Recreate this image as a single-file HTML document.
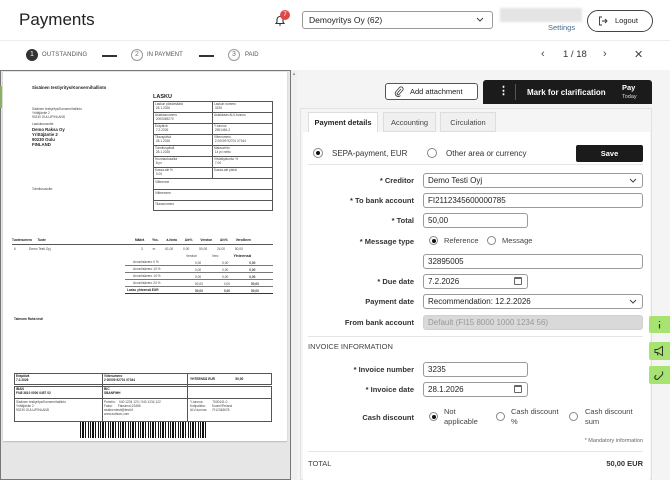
<!DOCTYPE html>
<html><head><meta charset="utf-8"><style>
*{box-sizing:border-box;margin:0;padding:0}
body{width:670px;height:480px;overflow:hidden;background:#fff;font-family:"Liberation Sans",Arial,sans-serif;color:#222;position:relative}
.a{position:absolute}
.t{position:absolute;white-space:nowrap}
.inp{position:absolute;border:1px solid #9a9a9a;border-radius:3px;background:#fff;font-size:8px;padding-left:4px;line-height:13px;height:15px}
.lbl{position:absolute;right:256px;font-size:7.5px;color:#333;font-weight:bold;white-space:nowrap}
.rad{position:absolute;width:10px;height:10px;border:1px solid #888;border-radius:50%;background:#fff}
.rad.on::after{content:"";position:absolute;left:2px;top:2px;width:4px;height:4px;border-radius:50%;background:#111}
.p{position:absolute;font-size:3.2px;color:#444;white-space:nowrap;line-height:4px}
.b{position:absolute;border:0.8px solid #555}
.gb{position:absolute;left:649px;width:21px;background:#a6e370;border-radius:2px 0 0 2px}
.cal{position:absolute;width:8px;height:8px;border:1px solid #666;border-top-width:2px;border-radius:1px}
</style></head><body>
<div class="t" style="left:19px;top:10px;font-size:17px;color:#222">Payments</div>
<svg class="a" style="left:274px;top:14px" width="12" height="13" viewBox="0 0 12 13"><path d="M2 9.5h8l-1-1.5V5.5a3 3 0 0 0-6 0V8z M5 11h2" fill="none" stroke="#333" stroke-width="1.1"/></svg>
<div class="a" style="left:280px;top:10px;width:10px;height:10px;border-radius:50%;background:#e04848;color:#fff;font-size:6.5px;text-align:center;line-height:10px">7</div>
<div class="a" style="left:302px;top:11px;width:191px;height:18px;border:1px solid #999;border-radius:3px;font-size:8.5px;padding-left:6px;line-height:16px">Demoyritys Oy (62)</div>
<svg class="a" style="left:476px;top:17px" width="8" height="6"><path d="M1 1l3 3 3-3" fill="none" stroke="#444"/></svg>
<div class="a" style="left:500px;top:8px;width:82px;height:14px;background:#e4e4e4;filter:blur(1px)"></div>
<div class="t" style="left:548px;top:23px;font-size:7.5px;color:#4a6a8a">Settings</div>
<div class="a" style="left:587px;top:10px;width:66px;height:22px;border:1px solid #444;border-radius:11px;font-size:7.5px;line-height:20px;padding-left:27px">Logout</div>
<svg class="a" style="left:598px;top:16px" width="10" height="10"><path d="M4 1H1.5v8H4M4 5h5M7 3l2 2-2 2" fill="none" stroke="#333" stroke-width="0.9"/></svg>
<div class="a" style="left:0;top:40px;width:670px;height:1px;background:#eee"></div>
<div class="a" style="left:26px;top:49px;width:12px;height:12px;border-radius:50%;background:#333;color:#fff;font-size:7px;text-align:center;line-height:12px">1</div>
<div class="t" style="left:42px;top:52px;font-size:6px;color:#555;letter-spacing:.2px">OUTSTANDING</div>
<div class="a" style="left:102px;top:55px;width:15px;height:1.5px;background:#333"></div>
<div class="a" style="left:131px;top:49px;width:12px;height:12px;border-radius:50%;border:1px solid #999;color:#777;font-size:7px;text-align:center;line-height:10px">2</div>
<div class="t" style="left:147px;top:52px;font-size:6px;color:#555">IN PAYMENT</div>
<div class="a" style="left:199px;top:55px;width:15px;height:1.5px;background:#333"></div>
<div class="a" style="left:228px;top:49px;width:12px;height:12px;border-radius:50%;border:1px solid #999;color:#777;font-size:7px;text-align:center;line-height:10px">3</div>
<div class="t" style="left:245px;top:52px;font-size:6px;color:#555">PAID</div>
<div class="t" style="left:541px;top:48px;font-size:11px;color:#444">‹</div>
<div class="t" style="left:563px;top:49px;font-size:9.5px;color:#333">1 / 18</div>
<div class="t" style="left:603px;top:48px;font-size:11px;color:#444">›</div>
<div class="t" style="left:634px;top:48px;font-size:11px;color:#444">✕</div>
<div class="a" style="left:0;top:70px;width:291px;height:410px;background:#e6e6e6;border:1px solid #777"></div>
<div class="a" style="left:3px;top:72px;width:284px;height:369px;background:#fff;box-shadow:0 1px 1px #bbb"></div>
<div class="a" style="left:291px;top:70px;width:6px;height:410px;background:#f0f0f0"></div>
<div class="t" style="left:292px;top:71px;font-size:4px;color:#888">▲</div>
<div class="a" style="left:0;top:86px;width:2px;height:22px;background:#8ab060"></div>
<div class="p" style="left:32px;top:86px;font-size:4.3px;font-weight:bold;color:#222">Sisäinen testiyritys/Konsernihallinto</div>
<div class="p" style="left:153px;top:94px;font-size:5.5px;font-weight:bold;color:#222;line-height:6px">LASKU</div>
<div class="p" style="left:32px;top:107px">Sisäinen testiyritys/Konsernihallinto<br>Yrittäjäntie 2<br>90230 OULU/FINLAND</div>
<div class="p" style="left:32px;top:122px">Laskutusosoite:</div>
<div class="p" style="left:32px;top:127px;font-size:4.3px;font-weight:bold;color:#222;line-height:5px">Demo Raksa Oy<br>Yrittäjäntie 2<br>90230 Oulu<br>FINLAND</div>
<div class="p" style="left:32px;top:187px">Toimitusosoite:</div>
<div class="b" style="left:153px;top:101px;width:120px;height:110px"></div>
<div class="a" style="left:212px;top:101px;width:1px;height:77px;background:#555"></div>
<div class="a" style="left:153px;top:112px;width:120px;height:1px;background:#555"></div>
<div class="a" style="left:153px;top:123px;width:120px;height:1px;background:#555"></div>
<div class="a" style="left:153px;top:134px;width:120px;height:1px;background:#555"></div>
<div class="a" style="left:153px;top:145px;width:120px;height:1px;background:#555"></div>
<div class="a" style="left:153px;top:156px;width:120px;height:1px;background:#555"></div>
<div class="a" style="left:153px;top:167px;width:120px;height:1px;background:#555"></div>
<div class="a" style="left:153px;top:178px;width:120px;height:1px;background:#555"></div>
<div class="a" style="left:153px;top:189px;width:120px;height:1px;background:#555"></div>
<div class="a" style="left:153px;top:200px;width:120px;height:1px;background:#555"></div>
<div class="p" style="left:155px;top:102px">Laskun päivämäärä<br>&nbsp;28.1.2026</div>
<div class="p" style="left:214px;top:102px">Laskun numero<br>&nbsp;3235</div>
<div class="p" style="left:155px;top:113px">Asiakasnumero<br>&nbsp;2000069270</div>
<div class="p" style="left:214px;top:113px">Asiakkaan ALV-tunnus</div>
<div class="p" style="left:155px;top:124px">Eräpäivä<br>&nbsp;7.2.2026</div>
<div class="p" style="left:214px;top:124px">Y-tunnus<br>&nbsp;2951454-2</div>
<div class="p" style="left:155px;top:135px">Tilauspäivä<br>&nbsp;28.1.2026</div>
<div class="p" style="left:214px;top:135px">Viitenumero<br>&nbsp;2 00009 92701 07344</div>
<div class="p" style="left:155px;top:146px">Toimituspäivä<br>&nbsp;28.1.2026</div>
<div class="p" style="left:214px;top:146px">Maksuehto<br>&nbsp;14 pv netto</div>
<div class="p" style="left:155px;top:157px">Huomautusaika<br>&nbsp;8 pv</div>
<div class="p" style="left:214px;top:157px">Viivästyskorko %<br>&nbsp;7.00</div>
<div class="p" style="left:155px;top:168px">Kassa-ale %<br>&nbsp;0.00</div>
<div class="p" style="left:214px;top:168px">Kassa-ale päivä</div>
<div class="p" style="left:155px;top:180px">Viitteenne</div>
<div class="p" style="left:155px;top:191px">Viitteemme</div>
<div class="p" style="left:155px;top:202px">Tilausnumero</div>
<div class="p" style="left:12px;top:238px;font-weight:bold;color:#222">Tuotenumero&nbsp;&nbsp;&nbsp;&nbsp;&nbsp;&nbsp;Tuote</div>
<div class="p" style="left:135px;top:238px;font-weight:bold;color:#222;word-spacing:7px">Määrä Yks. á-hinta Ale% Veroton Alv% Verollinen</div>
<div class="a" style="left:12px;top:244px;width:261px;height:0.8px;background:#555"></div>
<div class="p" style="left:14px;top:247px">6&nbsp;&nbsp;&nbsp;&nbsp;&nbsp;&nbsp;&nbsp;&nbsp;&nbsp;&nbsp;&nbsp;&nbsp;&nbsp;&nbsp;&nbsp;Demo Testi Oyj</div>
<div class="p" style="left:141px;top:247px;word-spacing:9px">3 m 61,00 0,00 50,00 24,00 50,00</div>
<div class="p" style="left:186px;top:254px;word-spacing:14px">Veroton Vero <b style="font-size:4px;color:#222">Yhteensä</b></div>
<div class="a" style="left:125px;top:259px;width:148px;height:34px;background:repeating-linear-gradient(#fff 0 6px,#777 6px 7px)"></div>
<div class="p" style="left:133px;top:260px">Arvonlisävero 0 %</div>
<div class="p" style="left:133px;top:267px">Arvonlisävero 10 %</div>
<div class="p" style="left:133px;top:274px">Arvonlisävero 14 %</div>
<div class="p" style="left:133px;top:281px">Arvonlisävero 24 %</div>
<div class="p" style="left:127px;top:288px;font-weight:bold;color:#222">Lasku yhteensä EUR</div>
<div class="p" style="left:195px;top:260px;line-height:7px;word-spacing:20px">0,00 0,00 <b>0,00</b><br>0,00 0,00 <b>0,00</b><br>0,00 0,00 <b>0,00</b><br>50,00 0,00 <b>50,00</b><br><b>50,00 0,00 50,00</b></div>
<div class="a" style="left:125px;top:293px;width:148px;height:1px;background:#333"></div>
<div class="p" style="left:14px;top:317px;font-weight:bold;color:#222">Talenom Raha testi</div>
<div class="b" style="left:14px;top:373px;width:258px;height:12px"></div>
<div class="a" style="left:102px;top:373px;width:1px;height:49px;background:#555"></div>
<div class="a" style="left:187px;top:373px;width:1px;height:49px;background:#555"></div>
<div class="b" style="left:14px;top:386px;width:258px;height:36px"></div>
<div class="a" style="left:14px;top:398px;width:258px;height:1px;background:#555"></div>
<div class="p" style="left:16px;top:374px;font-weight:bold;color:#222">Eräpäivä<br>7.2.2026</div>
<div class="p" style="left:104px;top:374px;font-weight:bold;color:#222">Viitenumero<br>2 00009 92701 07344</div>
<div class="p" style="left:190px;top:377px;font-weight:bold;color:#222">YHTEENSÄ EUR&nbsp;&nbsp;&nbsp;&nbsp;&nbsp;&nbsp;&nbsp;&nbsp;&nbsp;&nbsp;&nbsp;&nbsp;&nbsp;&nbsp;&nbsp;&nbsp;&nbsp;&nbsp;&nbsp;&nbsp;&nbsp;&nbsp;&nbsp;50,00</div>
<div class="p" style="left:16px;top:387px;font-weight:bold;color:#222">IBAN<br>FI48 3610 0000 0457 02</div>
<div class="p" style="left:104px;top:387px;font-weight:bold;color:#222">BIC<br>SBANFIHH</div>
<div class="p" style="left:16px;top:400px">Sisäinen testiyritys/Konsernihallinto<br>Yrittäjäntie 2<br>90230 OULU/FINLAND</div>
<div class="p" style="left:104px;top:400px">Puhelin:&nbsp;&nbsp;&nbsp;&nbsp;040 1234 123 / 040 1234 122<br>Faksi:&nbsp;&nbsp;&nbsp;&nbsp;&nbsp;&nbsp;Faksinro123456<br>sisäinentesti@testi.fi<br>www.kotisivu.com</div>
<div class="p" style="left:190px;top:400px">Y-tunnus:&nbsp;&nbsp;&nbsp;&nbsp;&nbsp;&nbsp;&nbsp;&nbsp;&nbsp;&nbsp;7000441-0<br>Kotipaikka:&nbsp;&nbsp;&nbsp;&nbsp;&nbsp;&nbsp;&nbsp;Suomi/Finland<br>ALV-tunnus:&nbsp;&nbsp;&nbsp;&nbsp;&nbsp;&nbsp;FI12345678</div>
<div class="a" style="left:80px;top:422px;width:126px;height:16px;background:repeating-linear-gradient(90deg,#111 0 1px,#fff 1px 2px,#111 2px 4px,#fff 4px 5px,#111 5px 6px,#fff 6px 8px,#111 8px 9px,#fff 9px 10px)"></div>
<div class="a" style="left:297px;top:70px;width:373px;height:410px;background:#f4f4f4"></div>
<div class="a" style="left:385px;top:83px;width:93px;height:17px;border:1px solid #555;border-radius:3px;background:#fff;font-size:7.5px;line-height:15px;padding-left:24px">Add attachment</div>
<svg class="a" style="left:394px;top:86px" width="10" height="11"><path d="M7 3L3.5 7a1 1 0 0 0 1.5 1.5L8.5 4.5a2 2 0 0 0-3-3L2 5.5a3 3 0 0 0 4.5 4" fill="none" stroke="#444" stroke-width="0.9"/></svg>
<div class="a" style="left:483px;top:80px;width:169px;height:24px;background:#1b1b1b;border-radius:3px 3px 0 0"></div>
<div class="t" style="left:498px;top:84px;font-size:11px;color:#fff;font-weight:bold">⋮</div>
<div class="a" style="left:515px;top:84px;width:1px;height:16px;background:#555"></div>
<div class="t" style="left:527px;top:88px;font-size:8px;color:#fff;font-weight:bold">Mark for clarification</div>
<div class="t" style="left:622px;top:83px;font-size:7.5px;color:#fff;font-weight:bold">Pay</div>
<div class="t" style="left:622px;top:94px;font-size:5.5px;color:#ddd">Today</div>
<div class="a" style="left:300px;top:108px;width:352px;height:372px;border:1px solid #e2e2e2;background:#f5f5f5"></div>
<div class="a" style="left:308px;top:112px;width:70px;height:21px;background:#fff;border:1px solid #ddd;border-bottom:none;font-size:7.5px;font-weight:bold;text-align:center;line-height:20px">Payment details</div>
<div class="a" style="left:383px;top:112px;width:53px;height:20px;background:#f0f0f0;border:1px solid #ddd;font-size:7.5px;text-align:center;line-height:19px;color:#444">Accounting</div>
<div class="a" style="left:440px;top:112px;width:56px;height:20px;background:#f0f0f0;border:1px solid #ddd;font-size:7.5px;text-align:center;line-height:19px;color:#444">Circulation</div>
<div class="a" style="left:303px;top:132px;width:347px;height:348px;background:#fff"></div>
<div class="rad on" style="left:313px;top:148px"></div>
<div class="t" style="left:332px;top:149px;font-size:8px;color:#333">SEPA-payment, EUR</div>
<div class="rad" style="left:427px;top:148px"></div>
<div class="t" style="left:446px;top:149px;font-size:8px;color:#333">Other area or currency</div>
<div class="a" style="left:576px;top:145px;width:67px;height:17px;background:#1b1b1b;border-radius:2px;color:#fff;font-size:7.5px;font-weight:bold;text-align:center;line-height:17px">Save</div>
<div class="a" style="left:308px;top:164px;width:335px;height:1px;background:#e5e5e5"></div>
<div class="lbl" style="top:176px">* Creditor</div>
<div class="inp" style="left:423px;top:173px;width:220px">Demo Testi Oyj</div>
<svg class="a" style="left:629px;top:178px" width="8" height="6"><path d="M1 1l3 3 3-3" fill="none" stroke="#444"/></svg>
<div class="lbl" style="top:196px">* To bank account</div>
<div class="inp" style="left:423px;top:193px;width:220px">FI2112345600000785</div>
<div class="lbl" style="top:216px">* Total</div>
<div class="inp" style="left:423px;top:213px;width:105px">50,00</div>
<div class="lbl" style="top:237px">* Message type</div>
<div class="rad on" style="left:429px;top:236px;width:9px;height:9px"></div>
<div class="t" style="left:444px;top:236px;font-size:7.5px;color:#444">Reference</div>
<div class="rad" style="left:487px;top:236px;width:9px;height:9px"></div>
<div class="t" style="left:502px;top:236px;font-size:7.5px;color:#444">Message</div>
<div class="inp" style="left:423px;top:254px;width:220px">32895005</div>
<div class="lbl" style="top:277px">* Due date</div>
<div class="inp" style="left:423px;top:274px;width:105px">7.2.2026</div>
<div class="cal" style="left:514px;top:277px"></div>
<div class="lbl" style="top:297px">Payment date</div>
<div class="inp" style="left:423px;top:294px;width:220px">Recommendation: 12.2.2026</div>
<svg class="a" style="left:629px;top:299px" width="8" height="6"><path d="M1 1l3 3 3-3" fill="none" stroke="#444"/></svg>
<div class="lbl" style="top:318px">From bank account</div>
<div class="inp" style="left:423px;top:315px;width:220px;background:#d9d9d9;border-color:#d0d0d0;color:#999">Default (FI15 8000 1000 1234 56)</div>
<div class="a" style="left:308px;top:336px;width:335px;height:1px;background:#e5e5e5"></div>
<div class="t" style="left:308px;top:342px;font-size:7.5px;color:#444">INVOICE INFORMATION</div>
<div class="lbl" style="top:365px">* Invoice number</div>
<div class="inp" style="left:423px;top:362px;width:105px">3235</div>
<div class="lbl" style="top:385px">* Invoice date</div>
<div class="inp" style="left:423px;top:382px;width:105px">28.1.2026</div>
<div class="cal" style="left:514px;top:385px"></div>
<div class="lbl" style="top:413px">Cash discount</div>
<div class="rad on" style="left:429px;top:412px;width:9px;height:9px"></div>
<div class="t" style="left:444px;top:407px;font-size:7.5px;color:#444;line-height:10px">Not<br>applicable</div>
<div class="rad" style="left:496px;top:412px;width:9px;height:9px"></div>
<div class="t" style="left:511px;top:407px;font-size:7.5px;color:#444;line-height:10px">Cash discount<br>%</div>
<div class="rad" style="left:569px;top:412px;width:9px;height:9px"></div>
<div class="t" style="left:585px;top:407px;font-size:7.5px;color:#444;line-height:10px">Cash discount<br>sum</div>
<div class="t" style="right:27px;top:438px;font-size:5.5px;color:#666">* Mandatory information</div>
<div class="a" style="left:308px;top:451px;width:335px;height:1px;background:#e5e5e5"></div>
<div class="t" style="left:308px;top:459px;font-size:7.5px;color:#444">TOTAL</div>
<div class="t" style="right:27px;top:459px;font-size:7.5px;font-weight:bold;color:#333">50,00 EUR</div>
<div class="gb" style="top:316px;height:17px"><svg width="21" height="17"><path d="M10.5 5v1M10.5 8v4.5" stroke="#333" stroke-width="1.2"/></svg></div>
<div class="gb" style="top:342px;height:18px"><svg width="21" height="18"><path d="M6 7.5h2.5l5-3v9l-5-3H6zM8 10.5l1 3" fill="none" stroke="#333" stroke-width="1"/></svg></div>
<div class="gb" style="top:366px;height:18px"><svg width="21" height="18"><path d="M13 5.5a2.5 2.5 0 0 1 0 3.5l-4 4a2 2 0 0 1-2.8-2.8l1-1" fill="none" stroke="#333" stroke-width="1.1"/></svg></div>
</body></html>
